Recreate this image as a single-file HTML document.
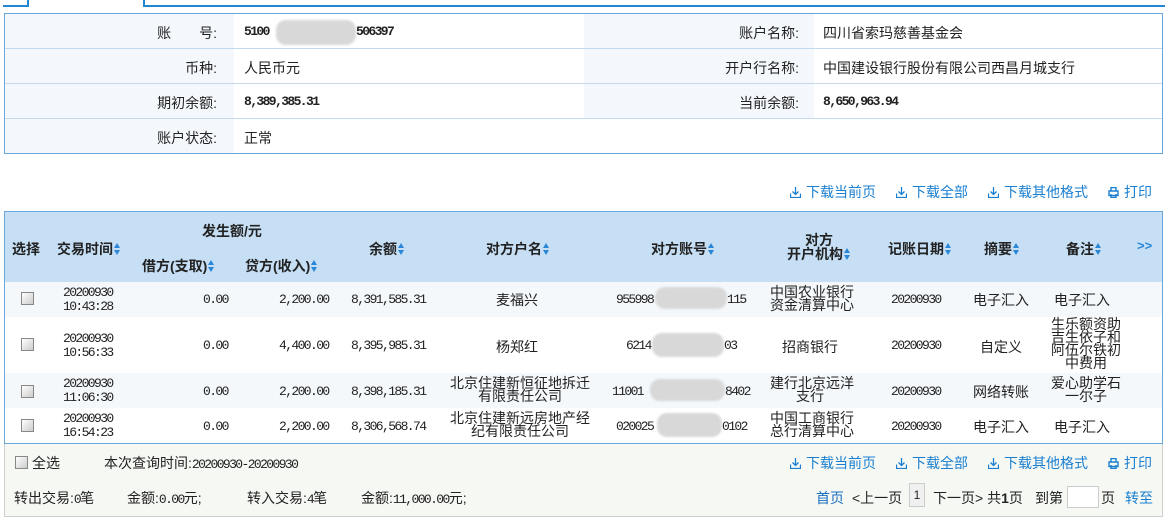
<!DOCTYPE html>
<html><head><meta charset="utf-8"><style>
*{margin:0;padding:0;box-sizing:border-box}
body{width:1165px;height:518px;background:#fff;position:relative;overflow:hidden;font-family:"Liberation Sans","Noto Sans CJK SC",sans-serif;font-size:14px;color:#222}
.a{position:absolute;white-space:nowrap}
.m{font-family:"Liberation Mono","Noto Sans CJK SC",monospace;font-size:13px;letter-spacing:-1.6px}
.b{font-weight:bold}
.lnk{color:#1a7fd0}
.c{text-align:center}
.r{text-align:right}
.blur{position:absolute;background:#d8d8d8;border-radius:10px;filter:blur(1px)}
.cb{position:absolute;width:13px;height:13px;border:1px solid #888;background:linear-gradient(135deg,#fff,#ccc)}
.ar{display:inline-block;width:7px;height:14px;vertical-align:-2px;margin-left:1px;position:relative}
.ar:before{content:"";position:absolute;left:0;top:1px;border:3.5px solid transparent;border-bottom:5px solid #2a86d6;border-top:0}
.ar:after{content:"";position:absolute;left:0;top:8px;border:3.5px solid transparent;border-top:5px solid #2a86d6;border-bottom:0}
.ic{display:inline-block;width:11px;height:11px;vertical-align:-1px;margin-right:5px}
.th{font-weight:bold;font-size:14px;color:#222}
.two{line-height:13px}
.t2{line-height:14px}
</style></head><body>
<div class="a" style="left:3px;top:5px;width:26px;height:2px;background:#1f88d0"></div>
<div class="a" style="left:27px;top:0;width:2px;height:7px;background:#1f88d0"></div>
<div class="a" style="left:143px;top:0;width:2px;height:7px;background:#1f88d0"></div>
<div class="a" style="left:143px;top:5px;width:1022px;height:2px;background:#1f88d0"></div>

<div class="a" style="left:4px;top:13px;width:1159px;height:141px;border:1px solid #6aa7dc"></div>
<div class="a" style="left:5px;top:14px;width:229px;height:139px;background:#f4f8fc"></div>
<div class="a" style="left:584px;top:14px;width:230px;height:104px;background:#f4f8fc"></div>
<div class="a" style="left:5px;top:48px;width:1157px;height:1px;background:#c3d9ee"></div>
<div class="a" style="left:5px;top:83px;width:1157px;height:1px;background:#c3d9ee"></div>
<div class="a" style="left:5px;top:118px;width:1157px;height:1px;background:#c3d9ee"></div>
<div class="a r" style="left:100px;top:23px;width:117px">账　　号:</div>
<div class="a r" style="left:100px;top:58px;width:117px">币种:</div>
<div class="a r" style="left:100px;top:93px;width:117px">期初余额:</div>
<div class="a r" style="left:100px;top:128px;width:117px">账户状态:</div>
<div class="a m b" style="left:244px;top:24px">5100</div>
<div class="blur" style="left:276px;top:20px;width:80px;height:25px"></div>
<div class="a m b" style="left:356px;top:24px">506397</div>
<div class="a" style="left:244px;top:58px">人民币元</div>
<div class="a m b" style="left:244px;top:94px">8,389,385.31</div>
<div class="a" style="left:244px;top:128px">正常</div>
<div class="a r" style="left:680px;top:23px;width:119px">账户名称:</div>
<div class="a r" style="left:680px;top:58px;width:119px">开户行名称:</div>
<div class="a r" style="left:680px;top:93px;width:119px">当前余额:</div>
<div class="a" style="left:823px;top:23px">四川省索玛慈善基金会</div>
<div class="a" style="left:823px;top:58px">中国建设银行股份有限公司西昌月城支行</div>
<div class="a m b" style="left:823px;top:94px">8,650,963.94</div>

<svg width="0" height="0" style="position:absolute"><defs>
<g id="dl"><path d="M5.5 0V7M2.5 4.5L5.5 7.5L8.5 4.5M0.5 6.5V10.5H10.5V6.5" fill="none" stroke="#1a7fd0" stroke-width="1.3"/></g>
<g id="pr"><path d="M3 4V0.5H8V4M1 4H10V8.5H1ZM3 7V10.5H8V7" fill="none" stroke="#1a7fd0" stroke-width="1.4"/></g>
</defs></svg>
<div class="a lnk" style="left:790px;top:182px"><svg class="ic"><use href="#dl"/></svg>下载当前页</div>
<div class="a lnk" style="left:896px;top:182px"><svg class="ic"><use href="#dl"/></svg>下载全部</div>
<div class="a lnk" style="left:988px;top:182px"><svg class="ic"><use href="#dl"/></svg>下载其他格式</div>
<div class="a lnk" style="left:1108px;top:182px"><svg class="ic"><use href="#pr"/></svg>打印</div>

<div class="a" style="left:4px;top:211px;width:1159px;height:233px;border:1px solid #6aa7dc;border-bottom:0"></div>
<div class="a" style="left:5px;top:212px;width:1157px;height:70px;background:#c6dff5"></div>
<div class="a" style="left:5px;top:282px;width:1157px;height:35px;background:#f4f8fb"></div>
<div class="a" style="left:5px;top:373px;width:1157px;height:35px;background:#f4f8fb"></div>

<div class="a th" style="left:12px;top:239px">选择</div>
<div class="a th" style="left:57px;top:239px">交易时间<span class="ar"></span></div>
<div class="a th" style="left:202px;top:221px">发生额/元</div>
<div class="a th" style="left:142px;top:256px">借方(支取)<span class="ar"></span></div>
<div class="a th" style="left:245px;top:256px">贷方(收入)<span class="ar"></span></div>
<div class="a th" style="left:369px;top:239px">余额<span class="ar"></span></div>
<div class="a th" style="left:486px;top:239px">对方户名<span class="ar"></span></div>
<div class="a th" style="left:651px;top:239px">对方账号<span class="ar"></span></div>
<div class="a th c" style="left:783px;top:233px;width:72px;line-height:14px">对方<br>开户机构<span class="ar"></span></div>
<div class="a th" style="left:888px;top:239px">记账日期<span class="ar"></span></div>
<div class="a th" style="left:984px;top:239px">摘要<span class="ar"></span></div>
<div class="a th" style="left:1066px;top:239px">备注<span class="ar"></span></div>
<div class="a" style="left:1137px;top:238px;color:#2a86d6;font-weight:bold;font-size:13px">&gt;&gt;</div>

<div class="cb" style="left:21px;top:292px"></div>
<div class="cb" style="left:21px;top:338px"></div>
<div class="cb" style="left:21px;top:385px"></div>
<div class="cb" style="left:21px;top:419px"></div>

<div class="a m t2" style="left:63px;top:286px">20200930<br>10:43:28</div>
<div class="a m t2" style="left:63px;top:332px">20200930<br>10:56:33</div>
<div class="a m t2" style="left:63px;top:377px">20200930<br>11:06:30</div>
<div class="a m t2" style="left:63px;top:412px">20200930<br>16:54:23</div>

<div class="a m" style="left:203px;top:292px">0.00</div>
<div class="a m" style="left:203px;top:338px">0.00</div>
<div class="a m" style="left:203px;top:384px">0.00</div>
<div class="a m" style="left:203px;top:419px">0.00</div>

<div class="a m" style="left:279px;top:292px">2,200.00</div>
<div class="a m" style="left:279px;top:338px">4,400.00</div>
<div class="a m" style="left:279px;top:384px">2,200.00</div>
<div class="a m" style="left:279px;top:419px">2,200.00</div>

<div class="a m" style="left:351px;top:292px">8,391,585.31</div>
<div class="a m" style="left:351px;top:338px">8,395,985.31</div>
<div class="a m" style="left:351px;top:384px">8,398,185.31</div>
<div class="a m" style="left:351px;top:419px">8,306,568.74</div>

<div class="a" style="left:496px;top:290px">麦福兴</div>
<div class="a" style="left:496px;top:337px">杨郑红</div>
<div class="a c two" style="left:445px;top:377px;width:150px">北京住建新恒征地拆迁<br>有限责任公司</div>
<div class="a c two" style="left:445px;top:412px;width:150px">北京住建新远房地产经<br>纪有限责任公司</div>

<div class="a m" style="left:616px;top:292px">955998</div>
<div class="blur" style="left:655px;top:287px;width:72px;height:22px"></div>
<div class="a m" style="left:727px;top:292px">115</div>
<div class="a m" style="left:626px;top:338px">6214</div>
<div class="blur" style="left:652px;top:333px;width:72px;height:24px"></div>
<div class="a m" style="left:724px;top:338px">03</div>
<div class="a m" style="left:612px;top:384px">11001</div>
<div class="blur" style="left:650px;top:379px;width:75px;height:22px"></div>
<div class="a m" style="left:725px;top:384px">8402</div>
<div class="a m" style="left:616px;top:419px">020025</div>
<div class="blur" style="left:657px;top:413px;width:65px;height:24px"></div>
<div class="a m" style="left:722px;top:419px">0102</div>

<div class="a c two" style="left:770px;top:286px;width:80px">中国农业银行<br>资金清算中心</div>
<div class="a c" style="left:770px;top:337px;width:80px">招商银行</div>
<div class="a c two" style="left:770px;top:377px;width:80px">建行北京远洋<br>支行</div>
<div class="a c two" style="left:770px;top:412px;width:80px">中国工商银行<br>总行清算中心</div>

<div class="a m" style="left:891px;top:292px">20200930</div>
<div class="a m" style="left:891px;top:338px">20200930</div>
<div class="a m" style="left:891px;top:384px">20200930</div>
<div class="a m" style="left:891px;top:419px">20200930</div>

<div class="a" style="left:973px;top:290px">电子汇入</div>
<div class="a" style="left:980px;top:337px">自定义</div>
<div class="a" style="left:973px;top:382px">网络转账</div>
<div class="a" style="left:973px;top:417px">电子汇入</div>

<div class="a" style="left:1054px;top:290px">电子汇入</div>
<div class="a c two" style="left:1046px;top:318px;width:80px">生乐额资助<br>吉生依子和<br>阿伍尔铁初<br>中费用</div>
<div class="a c two" style="left:1046px;top:377px;width:80px">爱心助学石<br>一尔子</div>
<div class="a" style="left:1054px;top:417px">电子汇入</div>

<div class="a" style="left:4px;top:443px;width:1159px;height:74px;background:#f6f8f4;border:1px solid #cfd2cc;border-top:0"></div>
<div class="a" style="left:4px;top:443px;width:1159px;height:1px;background:#6aa7dc"></div>
<div class="cb" style="left:15px;top:456px"></div>
<div class="a" style="left:32px;top:453px">全选</div>
<div class="a" style="left:104px;top:453px">本次查询时间:<span class="m">20200930-20200930</span></div>
<div class="a lnk" style="left:790px;top:453px"><svg class="ic"><use href="#dl"/></svg>下载当前页</div>
<div class="a lnk" style="left:896px;top:453px"><svg class="ic"><use href="#dl"/></svg>下载全部</div>
<div class="a lnk" style="left:988px;top:453px"><svg class="ic"><use href="#dl"/></svg>下载其他格式</div>
<div class="a lnk" style="left:1108px;top:453px"><svg class="ic"><use href="#pr"/></svg>打印</div>

<div class="a" style="left:14px;top:488px">转出交易:<span class="m">0</span>笔</div>
<div class="a" style="left:127px;top:488px">金额:<span class="m">0.00</span>元;</div>
<div class="a" style="left:247px;top:488px">转入交易:<span class="m">4</span>笔</div>
<div class="a" style="left:361px;top:488px">金额:<span class="m">11,000.00</span>元;</div>

<div class="a" style="left:816px;top:488px;color:#1a6fc0">首页</div>
<div class="a" style="left:852px;top:488px">&lt;上一页</div>
<div class="a c" style="left:909px;top:483px;width:16px;height:24px;border:1px solid #ccc;background:#f0f0f0;font-size:12px;line-height:22px">1</div>
<div class="a" style="left:933px;top:488px">下一页&gt; 共<b>1</b>页</div>
<div class="a" style="left:1035px;top:488px">到第</div>
<div class="a" style="left:1067px;top:486px;width:32px;height:22px;border:1px solid #ccc;background:#fff"></div>
<div class="a" style="left:1101px;top:488px">页</div>
<div class="a lnk" style="left:1125px;top:488px">转至</div>
</body></html>
